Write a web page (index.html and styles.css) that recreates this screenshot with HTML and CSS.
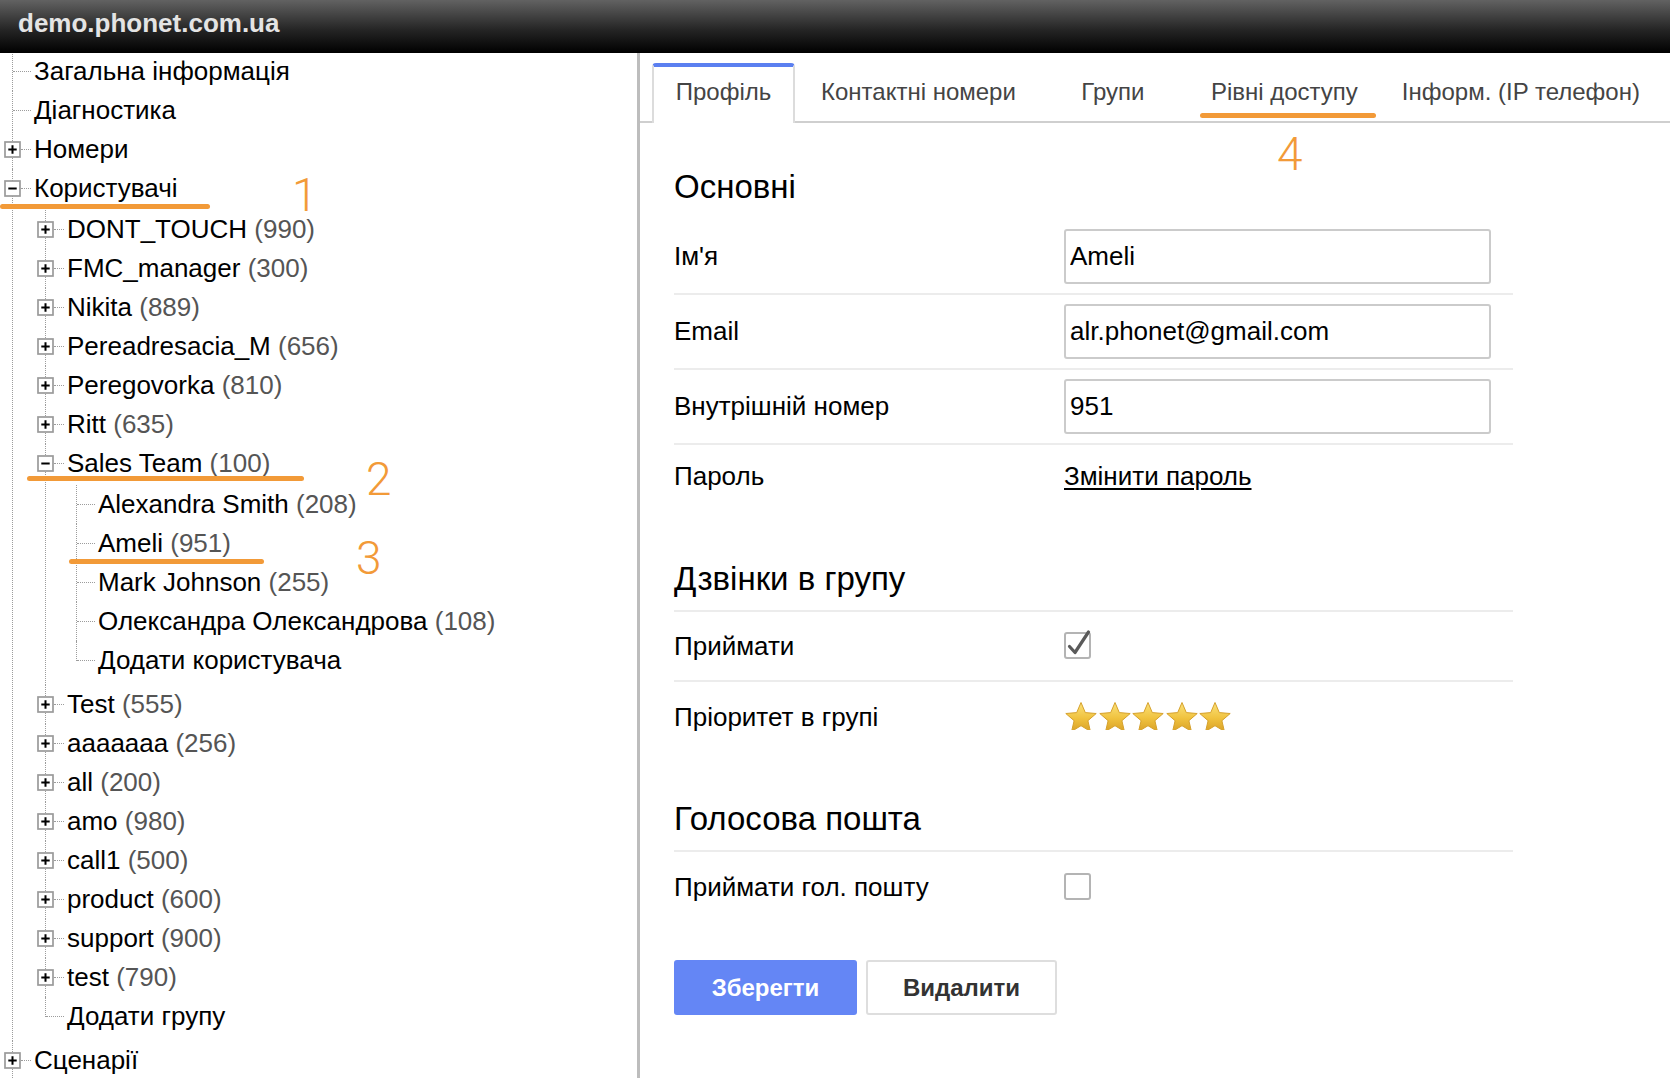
FILE: index.html
```html
<!DOCTYPE html>
<html lang="uk">
<head>
<meta charset="utf-8">
<title>demo.phonet.com.ua</title>
<link rel="stylesheet" href="styles.css">
</head>
<body>
<header class="topbar">demo.phonet.com.ua</header>
<div class="main">
  <aside class="sidebar">
    <ul class="tree root">
      <li class="node"><div class="row"><span class="twig"><span class="hline"></span></span><span class="label">Загальна інформація</span></div></li>
      <li class="node"><div class="row"><span class="twig"><span class="hline"></span></span><span class="label">Діагностика</span></div></li>
      <li class="node"><div class="row"><span class="twig"><svg class="exp" viewBox="0 0 17 17"><rect x="1" y="1" width="15" height="15" fill="#fff" stroke="#9a9a9a" stroke-width="1.7"/><path d="M4.3 8.5h8.4M8.5 4.3v8.4" stroke="#000" stroke-width="2"/></svg><span class="hline"></span></span><span class="label">Номери</span></div></li>
      <li class="node"><div class="row"><span class="twig"><svg class="exp" viewBox="0 0 17 17"><rect x="1" y="1" width="15" height="15" fill="#fff" stroke="#9a9a9a" stroke-width="1.7"/><path d="M4.3 8.5h8.4" stroke="#000" stroke-width="2"/></svg><span class="hline"></span></span><span class="label">Користувачі</span></div>
        <ul class="tree sub">
          <li class="node"><div class="row"><span class="twig"><svg class="exp" viewBox="0 0 17 17"><rect x="1" y="1" width="15" height="15" fill="#fff" stroke="#9a9a9a" stroke-width="1.7"/><path d="M4.3 8.5h8.4M8.5 4.3v8.4" stroke="#000" stroke-width="2"/></svg><span class="hline"></span></span><span class="label">DONT_TOUCH <span class="cnt">(990)</span></span></div></li>
          <li class="node"><div class="row"><span class="twig"><svg class="exp" viewBox="0 0 17 17"><rect x="1" y="1" width="15" height="15" fill="#fff" stroke="#9a9a9a" stroke-width="1.7"/><path d="M4.3 8.5h8.4M8.5 4.3v8.4" stroke="#000" stroke-width="2"/></svg><span class="hline"></span></span><span class="label">FMC_manager <span class="cnt">(300)</span></span></div></li>
          <li class="node"><div class="row"><span class="twig"><svg class="exp" viewBox="0 0 17 17"><rect x="1" y="1" width="15" height="15" fill="#fff" stroke="#9a9a9a" stroke-width="1.7"/><path d="M4.3 8.5h8.4M8.5 4.3v8.4" stroke="#000" stroke-width="2"/></svg><span class="hline"></span></span><span class="label">Nikita <span class="cnt">(889)</span></span></div></li>
          <li class="node"><div class="row"><span class="twig"><svg class="exp" viewBox="0 0 17 17"><rect x="1" y="1" width="15" height="15" fill="#fff" stroke="#9a9a9a" stroke-width="1.7"/><path d="M4.3 8.5h8.4M8.5 4.3v8.4" stroke="#000" stroke-width="2"/></svg><span class="hline"></span></span><span class="label">Pereadresacia_M <span class="cnt">(656)</span></span></div></li>
          <li class="node"><div class="row"><span class="twig"><svg class="exp" viewBox="0 0 17 17"><rect x="1" y="1" width="15" height="15" fill="#fff" stroke="#9a9a9a" stroke-width="1.7"/><path d="M4.3 8.5h8.4M8.5 4.3v8.4" stroke="#000" stroke-width="2"/></svg><span class="hline"></span></span><span class="label">Peregovorka <span class="cnt">(810)</span></span></div></li>
          <li class="node"><div class="row"><span class="twig"><svg class="exp" viewBox="0 0 17 17"><rect x="1" y="1" width="15" height="15" fill="#fff" stroke="#9a9a9a" stroke-width="1.7"/><path d="M4.3 8.5h8.4M8.5 4.3v8.4" stroke="#000" stroke-width="2"/></svg><span class="hline"></span></span><span class="label">Ritt <span class="cnt">(635)</span></span></div></li>
          <li class="node"><div class="row"><span class="twig"><svg class="exp" viewBox="0 0 17 17"><rect x="1" y="1" width="15" height="15" fill="#fff" stroke="#9a9a9a" stroke-width="1.7"/><path d="M4.3 8.5h8.4" stroke="#000" stroke-width="2"/></svg><span class="hline"></span></span><span class="label">Sales Team <span class="cnt">(100)</span></span></div>
            <ul class="tree sub deep">
              <li class="node"><div class="row"><span class="twig"><span class="hline"></span></span><span class="label">Alexandra Smith <span class="cnt">(208)</span></span></div></li>
              <li class="node"><div class="row"><span class="twig"><span class="hline"></span></span><span class="label">Ameli <span class="cnt">(951)</span></span></div></li>
              <li class="node"><div class="row"><span class="twig"><span class="hline"></span></span><span class="label">Mark Johnson <span class="cnt">(255)</span></span></div></li>
              <li class="node"><div class="row"><span class="twig"><span class="hline"></span></span><span class="label">Олександра Олександрова <span class="cnt">(108)</span></span></div></li>
              <li class="node last"><div class="row"><span class="twig"><span class="hline"></span></span><span class="label">Додати користувача</span></div></li>
            </ul>
          </li>
          <li class="node"><div class="row"><span class="twig"><svg class="exp" viewBox="0 0 17 17"><rect x="1" y="1" width="15" height="15" fill="#fff" stroke="#9a9a9a" stroke-width="1.7"/><path d="M4.3 8.5h8.4M8.5 4.3v8.4" stroke="#000" stroke-width="2"/></svg><span class="hline"></span></span><span class="label">Test <span class="cnt">(555)</span></span></div></li>
          <li class="node"><div class="row"><span class="twig"><svg class="exp" viewBox="0 0 17 17"><rect x="1" y="1" width="15" height="15" fill="#fff" stroke="#9a9a9a" stroke-width="1.7"/><path d="M4.3 8.5h8.4M8.5 4.3v8.4" stroke="#000" stroke-width="2"/></svg><span class="hline"></span></span><span class="label">aaaaaaa <span class="cnt">(256)</span></span></div></li>
          <li class="node"><div class="row"><span class="twig"><svg class="exp" viewBox="0 0 17 17"><rect x="1" y="1" width="15" height="15" fill="#fff" stroke="#9a9a9a" stroke-width="1.7"/><path d="M4.3 8.5h8.4M8.5 4.3v8.4" stroke="#000" stroke-width="2"/></svg><span class="hline"></span></span><span class="label">all <span class="cnt">(200)</span></span></div></li>
          <li class="node"><div class="row"><span class="twig"><svg class="exp" viewBox="0 0 17 17"><rect x="1" y="1" width="15" height="15" fill="#fff" stroke="#9a9a9a" stroke-width="1.7"/><path d="M4.3 8.5h8.4M8.5 4.3v8.4" stroke="#000" stroke-width="2"/></svg><span class="hline"></span></span><span class="label">amo <span class="cnt">(980)</span></span></div></li>
          <li class="node"><div class="row"><span class="twig"><svg class="exp" viewBox="0 0 17 17"><rect x="1" y="1" width="15" height="15" fill="#fff" stroke="#9a9a9a" stroke-width="1.7"/><path d="M4.3 8.5h8.4M8.5 4.3v8.4" stroke="#000" stroke-width="2"/></svg><span class="hline"></span></span><span class="label">call1 <span class="cnt">(500)</span></span></div></li>
          <li class="node"><div class="row"><span class="twig"><svg class="exp" viewBox="0 0 17 17"><rect x="1" y="1" width="15" height="15" fill="#fff" stroke="#9a9a9a" stroke-width="1.7"/><path d="M4.3 8.5h8.4M8.5 4.3v8.4" stroke="#000" stroke-width="2"/></svg><span class="hline"></span></span><span class="label">product <span class="cnt">(600)</span></span></div></li>
          <li class="node"><div class="row"><span class="twig"><svg class="exp" viewBox="0 0 17 17"><rect x="1" y="1" width="15" height="15" fill="#fff" stroke="#9a9a9a" stroke-width="1.7"/><path d="M4.3 8.5h8.4M8.5 4.3v8.4" stroke="#000" stroke-width="2"/></svg><span class="hline"></span></span><span class="label">support <span class="cnt">(900)</span></span></div></li>
          <li class="node"><div class="row"><span class="twig"><svg class="exp" viewBox="0 0 17 17"><rect x="1" y="1" width="15" height="15" fill="#fff" stroke="#9a9a9a" stroke-width="1.7"/><path d="M4.3 8.5h8.4M8.5 4.3v8.4" stroke="#000" stroke-width="2"/></svg><span class="hline"></span></span><span class="label">test <span class="cnt">(790)</span></span></div></li>
          <li class="node last"><div class="row"><span class="twig"><span class="hline"></span></span><span class="label">Додати групу</span></div></li>
        </ul>
      </li>
      <li class="node"><div class="row"><span class="twig"><svg class="exp" viewBox="0 0 17 17"><rect x="1" y="1" width="15" height="15" fill="#fff" stroke="#9a9a9a" stroke-width="1.7"/><path d="M4.3 8.5h8.4M8.5 4.3v8.4" stroke="#000" stroke-width="2"/></svg><span class="hline"></span></span><span class="label">Сценарії</span></div></li>
    </ul>
  </aside>

  <section class="panel">
    <nav class="tabs">
      <div class="tab active">Профіль</div>
      <div class="tab t-contacts">Контактні номери</div>
      <div class="tab t-groups">Групи</div>
      <div class="tab t-access">Рівні доступу</div>
      <div class="tab t-info">Інформ. (IP телефон)</div>
    </nav>

    <div class="form">
      <h2 class="sec plain">Основні</h2>
      <div class="frow line"><div class="flabel">Ім'я</div><div class="fval"><input class="inp" type="text" value="Ameli" readonly></div></div>
      <div class="frow line"><div class="flabel">Email</div><div class="fval"><input class="inp" type="text" value="alr.phonet@gmail.com" readonly></div></div>
      <div class="frow line"><div class="flabel">Внутрішній номер</div><div class="fval"><input class="inp" type="text" value="951" readonly></div></div>
      <div class="frow raised"><div class="flabel">Пароль</div><div class="fval"><a class="link" href="#">Змінити пароль</a></div></div>

      <h2 class="sec">Дзвінки в групу</h2>
      <div class="frow line"><div class="flabel">Приймати</div><div class="fval">
        <svg class="chk" width="30" height="32" viewBox="0 0 30 32"><rect x="1" y="5" width="25" height="25" rx="2" fill="#fff" stroke="#b4b4b4" stroke-width="2"/><path d="M5.5 18.5 L11 24.5 L24.5 4" fill="none" stroke="#5a5a5a" stroke-width="3.2" stroke-linecap="round" stroke-linejoin="round"/></svg>
      </div></div>
      <div class="frow"><div class="flabel">Пріоритет в групі</div><div class="fval">
        <div class="stars">
          <svg class="star" viewBox="0 0 34 34"><defs><linearGradient id="sg" x1="0" y1="0" x2="0" y2="1"><stop offset="0" stop-color="#fbe27a"/><stop offset="0.55" stop-color="#f0c23e"/><stop offset="1" stop-color="#d9a128"/></linearGradient></defs><path d="M17 1.5 L21.3 11.6 L32.2 12.5 L23.9 19.7 L26.4 30.4 L17 24.7 L7.6 30.4 L10.1 19.7 L1.8 12.5 L12.7 11.6 Z" fill="url(#sg)" stroke="#d6a12c" stroke-width="1" stroke-linejoin="round"/></svg>
          <svg class="star" viewBox="0 0 34 34"><path d="M17 1.5 L21.3 11.6 L32.2 12.5 L23.9 19.7 L26.4 30.4 L17 24.7 L7.6 30.4 L10.1 19.7 L1.8 12.5 L12.7 11.6 Z" fill="url(#sg)" stroke="#d6a12c" stroke-width="1" stroke-linejoin="round"/></svg>
          <svg class="star" viewBox="0 0 34 34"><path d="M17 1.5 L21.3 11.6 L32.2 12.5 L23.9 19.7 L26.4 30.4 L17 24.7 L7.6 30.4 L10.1 19.7 L1.8 12.5 L12.7 11.6 Z" fill="url(#sg)" stroke="#d6a12c" stroke-width="1" stroke-linejoin="round"/></svg>
          <svg class="star" viewBox="0 0 34 34"><path d="M17 1.5 L21.3 11.6 L32.2 12.5 L23.9 19.7 L26.4 30.4 L17 24.7 L7.6 30.4 L10.1 19.7 L1.8 12.5 L12.7 11.6 Z" fill="url(#sg)" stroke="#d6a12c" stroke-width="1" stroke-linejoin="round"/></svg>
          <svg class="star" viewBox="0 0 34 34"><path d="M17 1.5 L21.3 11.6 L32.2 12.5 L23.9 19.7 L26.4 30.4 L17 24.7 L7.6 30.4 L10.1 19.7 L1.8 12.5 L12.7 11.6 Z" fill="url(#sg)" stroke="#d6a12c" stroke-width="1" stroke-linejoin="round"/></svg>
        </div>
      </div></div>

      <h2 class="sec vm">Голосова пошта</h2>
      <div class="frow"><div class="flabel">Приймати гол. пошту</div><div class="fval">
        <svg class="chk" width="30" height="32" viewBox="0 0 30 32"><rect x="1" y="5" width="25" height="25" rx="2" fill="#fff" stroke="#b4b4b4" stroke-width="2"/></svg>
      </div></div>

      <div class="actions">
        <button class="btn primary" type="button">Зберегти</button>
        <button class="btn" type="button">Видалити</button>
      </div>
    </div>
  </section>
</div>

<div class="mark u1"></div>
<div class="mark u2"></div>
<div class="mark u3"></div>
<div class="mark u4"></div>
<div class="num n1">1</div>
<div class="num n2">2</div>
<div class="num n3">3</div>
<div class="num n4">4</div>
</body>
</html>
```

FILE: styles.css
```css
* { box-sizing: border-box; }

html, body {
  margin: 0;
  padding: 0;
}

body {
  width: 1670px;
  height: 1078px;
  overflow: hidden;
  position: relative;
  background: #fff;
  color: #000;
  font-family: "Liberation Sans", Arial, sans-serif;
}

/* ---------- top bar ---------- */
.topbar {
  height: 53px;
  padding-left: 18px;
  line-height: 46px;
  font-size: 26px;
  font-weight: bold;
  color: #e4e4e4;
  background: linear-gradient(to bottom, #626262 0%, #262626 55%, #000 100%);
}

.main {
  display: flex;
  height: 1025px;
}

/* ---------- tree ---------- */
.sidebar {
  width: 640px;
  flex: none;
  overflow: hidden;
  border-right: 3px solid #bdbdbd;
}

.tree {
  list-style: none;
  margin: 0;
  padding: 0;
}

.tree.root {
  margin-top: -1px;
}

.tree.sub {
  margin-left: 20px;
  padding: 2px 0 5px;
}

.tree.sub.deep {
  margin-left: 18px;
}

.node {
  margin-left: 12px;
  border-left: 1px dotted #9c9c9c;
}

.node.last {
  border-left-color: transparent;
}

.row {
  position: relative;
  display: flex;
  align-items: center;
  height: 39px;
  font-size: 26px;
  white-space: nowrap;
}

.node.last > .row::before {
  content: "";
  position: absolute;
  left: -1px;
  top: 0;
  height: 50%;
  border-left: 1px dotted #9c9c9c;
}

.twig {
  width: 21px;
  flex: none;
  align-self: stretch;
  display: flex;
  align-items: center;
}

.hline {
  flex: 1;
  height: 0;
  border-top: 1px dotted #9c9c9c;
  margin-right: 3px;
}

.exp {
  width: 17px;
  height: 17px;
  flex: none;
  margin-left: -9px;
}

.label {
  color: #000;
}

.cnt {
  color: #555;
}

/* ---------- right panel ---------- */
.panel {
  flex: 1;
  min-width: 0;
}

.tabs {
  display: flex;
  padding: 10px 0 0 12px;
  border-bottom: 2px solid #cfcfcf;
  height: 70px;
}

.tab {
  height: 58px;
  line-height: 58px;
  font-size: 24px;
  color: #444;
  white-space: nowrap;
  text-align: center;
}

.tab.active {
  width: 143px;
  height: 60px;
  line-height: 50px;
  margin-bottom: -2px;
  background: #fff;
  border: 2px solid #dcdcdc;
  border-top: 4px solid #5b7ff0;
  border-bottom: none;
  border-radius: 4px 4px 0 0;
}

.t-contacts { padding: 0 26px; }
.t-groups { width: 142px; }
.t-access { padding: 0 17px 0 27px; }
.t-info { padding: 0 0 0 27px; }

.form {
  width: 873px;
  padding-left: 34px;
}

.sec {
  margin: 44px 0 0;
  height: 53px;
  line-height: 40px;
  font-size: 33px;
  font-weight: normal;
  border-bottom: 2px solid #ececec;
}

.sec.plain {
  height: 53px;
  border-bottom: none;
}

.sec.vm {
  margin-top: 47px;
}

.frow {
  display: flex;
  align-items: center;
  min-height: 70px;
  padding: 9px 0;
}

.frow.line {
  border-bottom: 2px solid #ececec;
}

.frow.raised {
  padding: 5px 0 13px;
}

.flabel {
  width: 390px;
  flex: none;
  font-size: 26px;
  color: #000;
}

.fval {
  flex: 1;
  display: flex;
  align-items: center;
}

.inp {
  width: 427px;
  height: 55px;
  margin: 0;
  padding: 0 4px;
  border: 2px solid #cbcbcb;
  border-radius: 3px;
  font-family: "Liberation Sans", Arial, sans-serif;
  font-size: 26px;
  color: #000;
  background: #fff;
  outline: none;
}

.link {
  font-size: 26px;
  color: #000;
  text-decoration: underline;
  text-underline-offset: 3px;
}

.chk {
  display: block;
  margin-top: -4px;
}

.stars {
  display: flex;
  height: 29px;
  overflow: hidden;
  margin-top: -4px;
}

.star {
  width: 34px;
  height: 34px;
  flex: none;
  margin-right: -0.5px;
}

.actions {
  display: flex;
  gap: 9px;
  margin-top: 38px;
}

.btn {
  height: 55px;
  padding: 0;
  border-radius: 3px;
  font-family: "Liberation Sans", Arial, sans-serif;
  font-size: 24px;
  font-weight: bold;
  cursor: pointer;
}

.btn.primary {
  width: 183px;
  border: none;
  background: #6486f5;
  color: #fff;
}

.btn:not(.primary) {
  width: 191px;
  border: 2px solid #dedede;
  background: #fff;
  color: #333;
}

/* ---------- orange annotations (overlay) ---------- */
.mark {
  position: absolute;
  height: 5px;
  border-radius: 3px;
  background: #f29a38;
}

.u1 { left: 0; top: 204px; width: 210px; }
.u2 { left: 27px; top: 476px; width: 277px; }
.u3 { left: 69px; top: 559px; width: 195px; }
.u4 { left: 1200px; top: 113px; width: 176px; }

.num {
  position: absolute;
  font-family: Roboto, "Open Sans", sans-serif;
  font-weight: 300;
  font-size: 46px;
  line-height: 28px;
  color: #f29a38;
}

.n1 { left: 292px; top: 181px; }
.n2 { left: 366px; top: 465px; }
.n3 { left: 356px; top: 544px; }
.n4 { left: 1277px; top: 140px; }
```
